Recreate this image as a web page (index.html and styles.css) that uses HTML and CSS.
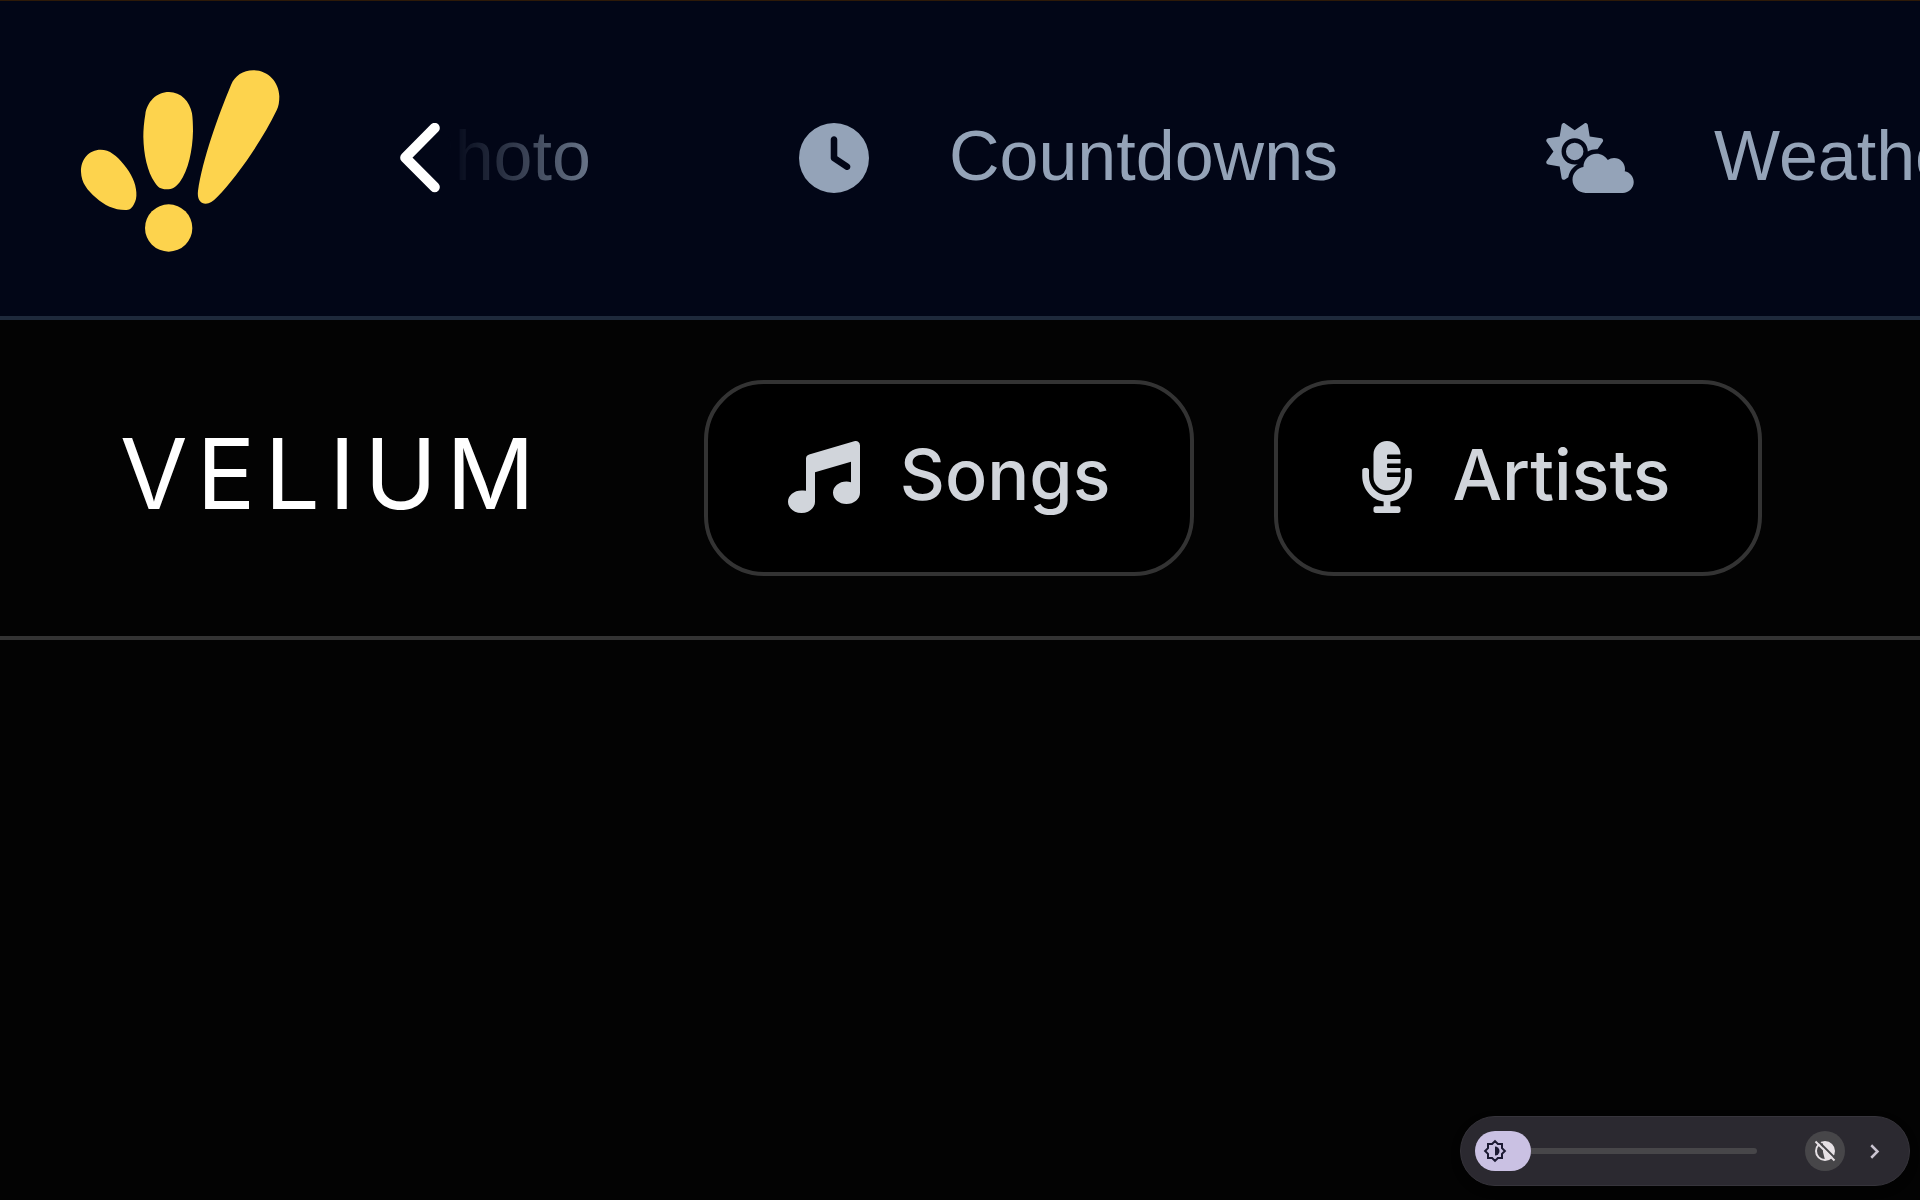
FILE: index.html
```html
<!DOCTYPE html>
<html lang="en">
<head>
  <meta charset="UTF-8" />
  <title>Velium</title>
  <meta name="viewport" content="width=device-width, initial-scale=1.0"/>
  <link rel="stylesheet" href="styles.css">
</head>
<body>

  <!-- Top Nav -->
  <header class="top-nav">
    <a href="#" class="brand" aria-label="Home">
      <svg viewBox="60 54 600 551" fill="#fdd34d">
        <path d="M122 296C88 296 62 324 63 362C64 396 82 417 108 440C133 462 162 477 196 477C208 477 214 473 221 461C228 449 230 440 229 424C228 396 213 366 192 341C170 314 149 296 122 296Z"/>
        <path d="M327 123C289 123 261 153 256 190C252 212 250 238 250 258C251 310 262 362 284 394C294 409 301 415 319 415C338 415 346 410 359 394C385 359 398 297 399 240C399 220 398 201 396 187C389 151 363 123 327 123Z"/>
        <path d="M580 58C549 58 525 74 513 102C475 194 427 326 414 420C411 444 421 458 437 458C449 458 459 451 471 439C530 378 605 271 650 178C656 166 658 153 658 136C657 92 623 58 580 58Z"/>
        <circle cx="326" cy="531" r="71"/>
      </svg>
    </a>
    <button type="button" class="scroll-btn" aria-label="Scroll left">
      <svg viewBox="60 99 121 210" fill="none" stroke="#fff" stroke-width="31" stroke-linecap="round" stroke-linejoin="round">
        <path d="M165 114L76 204L165 293"/>
      </svg>
    </button>
    <nav class="tabs">
      <ul>
        <li><a href="#"><span>Photo</span></a></li>
        <li>
          <a href="#">
            <svg viewBox="0 0 512 512" class="clock"><path d="M256 0a256 256 0 1 1 0 512A256 256 0 1 1 256 0zM232 120V256c0 8 4 15.500 10.700 20l96 64c11 7.400 25.900 4.400 33.300-6.700s4.400-25.900-6.700-33.300L280 243.200V120c0-13.300-10.700-24-24-24s-24 10.700-24 24z"/></svg>
            <span>Countdowns</span>
          </a>
        </li>
        <li>
          <a href="#">
            <svg viewBox="0 0 640 512" class="cloud"><path d="M294.200 1.200c5.100 2.100 8.700 6.700 9.600 12.100l14.100 84.700 84.700 14.100c5.400 .9 10 4.500 12.100 9.600s1.500 10.900-1.600 15.400l-38.500 55c-2.200-.1-4.400-.2-6.700-.2c-23.300 0-45.100 6.200-64 17.100l0-1.100c0-53-43-96-96-96s-96 43-96 96s43 96 96 96c8.100 0 15.900-1 23.400-2.900c-36.600 18.100-63.300 53.100-69.800 94.900l-24.400 17c-4.500 3.200-10.300 3.800-15.400 1.600s-8.700-6.700-9.600-12.100L98.100 317.900 13.400 303.800c-5.400-.9-10-4.500-12.100-9.600s-1.500-10.900 1.600-15.400L52.500 208 2.900 137.200c-3.200-4.500-3.800-10.300-1.600-15.400s6.700-8.700 12.100-9.600L98.100 98.100l14.100-84.700c.9-5.400 4.500-10 9.600-12.100s10.900-1.500 15.400 1.600L208 52.500 278.800 2.900c4.500-3.200 10.300-3.800 15.400-1.600zM144 208a64 64 0 1 1 128 0 64 64 0 1 1 -128 0zM639.900 431.900c0 44.200-35.800 80-80 80H288c-53 0-96-43-96-96c0-47.600 34.600-87 80-94.600l0-1.300c0-53 43-96 96-96c34.900 0 65.400 18.600 82.200 46.400c13-9.100 28.800-14.400 45.800-14.400c44.200 0 80 35.800 80 80c0 5.900-.6 11.700-1.900 17.200c37.400 6.700 65.800 39.400 65.800 78.700z"/></svg>
            <span>Weather</span>
          </a>
        </li>
      </ul>
    </nav>
  </header>

  <!-- Velium Bar -->
  <div class="app-bar">
    <h1 class="app-title">VELIUM</h1>
    <button type="button" class="pill">
      <svg viewBox="0 0 512 512" class="music"><path d="M470.380 1.510L150.410 96A32 32 0 0 0 128 126.510v226.410A139 139 0 0 0 96 352c-53 0-96 35-96 80s43 80 96 80 96-35 96-80V222l256-74v145A139 139 0 0 0 416 288c-53 0-96 35-96 80s43 80 96 80 96-35 96-80V32a32 32 0 0 0-41.620-30.490z"/></svg>
      Songs
    </button>
    <button type="button" class="pill">
      <svg viewBox="0 0 352 512" class="mic"><path d="M336 192h-16c-8.840 0-16 7.160-16 16v48c0 74.800-64.490 134.820-140.790 127.380C96.710 376.890 48 317.110 48 250.300V208c0-8.840-7.160-16-16-16H16c-8.840 0-16 7.160-16 16v40.160c0 89.640 63.970 169.550 152 181.690V464H96c-8.840 0-16 7.160-16 16v16c0 8.840 7.160 16 16 16h160c8.840 0 16-7.160 16-16v-16c0-8.840-7.160-16-16-16h-56v-33.770C285.710 418.470 352 344.900 352 256v-48c0-8.840-7.160-16-16-16zM176 352c53.020 0 96-42.980 96-96h-85.330c-5.890 0-10.670-3.580-10.670-8v-16c0-4.420 4.780-8 10.670-8H272v-32h-85.330c-5.890 0-10.670-3.580-10.670-8v-16c0-4.420 4.780-8 10.670-8H272v-32h-85.330c-5.890 0-10.670-3.580-10.670-8v-16c0-4.420 4.780-8 10.670-8H272c0-53.020-42.980-96-96-96S80 42.980 80 96v160c0 53.020 42.980 96 96 96z"/></svg>
      Artists
    </button>
  </div>

  <main></main>

  <!-- Brightness Widget -->
  <div class="dimmer">
    <div class="slider">
      <input type="range" min="0" max="100" value="0" aria-label="Brightness">
      <svg viewBox="0 0 24 24" class="sun">
        <path d="M19 9.100V5h-4.100L12 2.100 9.100 5H5v4.100L2.100 12 5 14.900V19h4.100l2.900 2.900 2.900-2.900H19v-4.100l2.900-2.900z" fill="none" stroke="#1c1a33" stroke-width="2"/>
        <path d="M12 7.500a4.500 4.500 0 0 1 0 9z" fill="#1c1a33"/>
      </svg>
    </div>
    <button type="button" class="contrast" aria-label="Turn off dimming">
      <svg viewBox="0 0 24 24">
        <circle cx="12" cy="12" r="9" fill="none" stroke="#e6e1e5" stroke-width="2"/>
        <path d="M10 3h2a9 9 0 0 1 0 18l-2-8z" fill="#e6e1e5"/>
        <path d="M4 1L23 20" stroke="#474649" stroke-width="2"/>
        <path d="M2.500 2.500L21.500 21.500" stroke="#e6e1e5" stroke-width="2"/>
      </svg>
    </button>
    <button type="button" class="more" aria-label="Expand">
      <svg viewBox="0 0 8 12" fill="none" stroke="#cac4d0" stroke-width="2"><path d="M1 1L6 6L1 11"/></svg>
    </button>
  </div>

</body>
</html>
```
FILE: styles.css
```css
* { box-sizing: border-box; }
body {
  margin: 0; min-height: 100vh;
  background: #030303; color: #fff;
  font-family: Inter, sans-serif;
}
svg { display: block; flex: none; }
a { color: inherit; text-decoration: none; }
button {
  border: 0; padding: 0; background: none;
  color: inherit; font: inherit; cursor: pointer;
}

/* top nav */
.top-nav {
  display: flex; align-items: center;
  height: 320px; padding-left: 80px;
  background: #020617;
  border-top: 1px solid #2e1a08; border-bottom: 4px solid #1e293b;
}
.brand { margin-right: 120px; padding-top: 4px; }
.brand svg { width: 200px; }
.scroll-btn svg { width: 40px; }
.tabs {
  flex: 1; min-width: 0; overflow: hidden;
  mask-image: linear-gradient(to right, transparent 8px, #000 208px);
}
.tabs ul {
  display: flex; gap: 208px;
  margin: 0 0 0 -32px; padding: 0; list-style: none;
}
.tabs a {
  display: flex; align-items: center; gap: 80px;
  color: #94a3b8; white-space: nowrap;
  font: 70px/76px "Liberation Sans", Arial, sans-serif;
}
.tabs span { padding-bottom: 4px; }
.tabs svg { height: 70px; fill: currentColor; }
.clock { width: 70px; }
.cloud { width: 88px; }
.scroll-btn, .tabs { margin-bottom: 1px; }

/* app bar */
.app-bar {
  display: flex; align-items: center; gap: 80px;
  padding: 60px 120px; height: 320px;
  border-bottom: 4px solid #333;
}
.app-title {
  margin: 0 80px 0 0; padding-bottom: 10px;
  font-size: 98px; font-weight: 400; letter-spacing: 9px;
}
.pill {
  display: flex; align-items: center; gap: 40px;
  min-width: 488px; height: 196px; padding: 0 80px 8px;
  border: 4px solid #333; border-radius: 60px;
  background: #000; color: #d1d5db;
  font-size: 70px; font-weight: 500;
}
.pill svg { height: 72px; margin-top: 6px; fill: currentColor; }
.music { width: 72px; }
.mic { width: 50px; margin-left: 4px; }

/* brightness widget */
.dimmer {
  position: fixed; right: 10px; bottom: 14px;
  display: flex; align-items: center;
  width: 450px; height: 70px; padding: 0 29px 0 14px;
  background: #2b2930; border: 1px solid #36343b; border-radius: 35px;
  box-shadow: 0 4px 8px rgba(0, 0, 0, 0.4);
}
.slider { position: relative; width: 282px; height: 40px; }
.slider input {
  appearance: none; display: block;
  width: 100%; height: 40px; margin: 0; background: none;
}
.slider input::-webkit-slider-runnable-track {
  height: 6px; border-radius: 3px; background: #474649;
}
.slider input::-webkit-slider-thumb {
  appearance: none; width: 56px; height: 40px; margin-top: -17px;
  border-radius: 20px; background: #cac1e3;
}
.sun {
  position: absolute; left: 8px; top: 8px;
  width: 24px; height: 24px; pointer-events: none;
}
.contrast {
  display: flex; align-items: center; justify-content: center;
  width: 40px; height: 40px; margin-left: 48px;
  border-radius: 50%; background: #474649;
}
.contrast svg { width: 24px; }
.more { margin-left: auto; }
.more svg { width: 10px; }
```
